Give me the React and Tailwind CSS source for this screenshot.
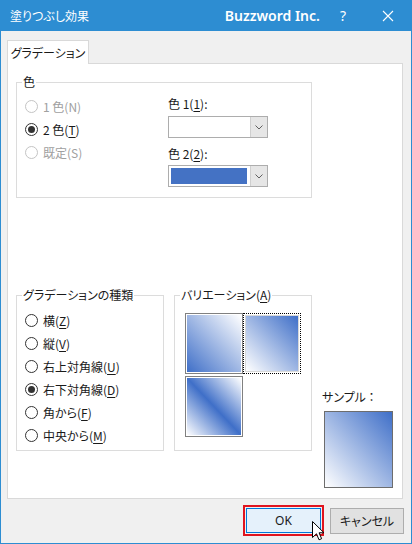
import React from "react";

const jp = "font-['Noto_Sans_CJK_JP','Noto_Sans',sans-serif] [font-feature-settings:'palt']";

function Radio({ label, checked, disabled }) {
  return (
    <div className="flex items-center h-[23px]">
      <span
        className={`w-[13px] h-[13px] rounded-full border bg-white flex items-center justify-center ${
          disabled ? "border-[#c4c4c4]" : "border-[#333333]"
        }`}
      >
        {checked && <span className="w-[7px] h-[7px] rounded-full bg-[#333333]" />}
      </span>
      <span className={`ml-[5px] text-[12px] leading-[14px] ${disabled ? "text-[#a0a0a0]" : "text-[#1a1a1a]"}`}>
        {label}
      </span>
    </div>
  );
}

function Group({ title, className, children }) {
  return (
    <div className={`relative border border-[#dcdcdc] ${className}`}>
      <span className="absolute -top-[8px] left-[5px] bg-white px-[1px] text-[12px] leading-[14px] text-[#1a1a1a]">
        {title}
      </span>
      {children}
    </div>
  );
}

function Combo({ fill }) {
  return (
    <div className="flex w-[100px] h-[22px] border border-[#adadad] bg-white">
      <div className="flex-1 p-[2px] pr-[3px]">
        {fill && <div className="w-full h-full bg-[#4472c4]" />}
      </div>
      <div className="w-[17px] bg-[#e6e6e6] border-l border-[#cfcfcf] flex items-center justify-center">
        <svg width="8" height="5" viewBox="0 0 8 5">
          <path d="M0.5 0.5 L4 4 L7.5 0.5" fill="none" stroke="#606060" strokeWidth="1" />
        </svg>
      </div>
    </div>
  );
}

const u = (c) => <span className="underline underline-offset-2">{c}</span>;

export default function App() {
  return (
    <div className={`w-[412px] h-[544px] bg-[#2d8dd2] flex flex-col ${jp}`}>
      {/* title bar */}
      <div className="h-[31px] flex items-center pl-[10px] text-white">
        <span className="text-[12px]">塗りつぶし効果</span>
        <span className="ml-auto text-[14px] font-semibold font-['Noto_Sans',sans-serif]">Buzzword Inc.</span>
        <span className="ml-[20px] text-[14px] font-['Noto_Sans',sans-serif]">?</span>
        <svg className="ml-[36px] mr-[18px]" width="12" height="12" viewBox="0 0 12 12">
          <path d="M1 1 L11 11 M11 1 L1 11" stroke="white" strokeWidth="1.1" />
        </svg>
      </div>

      {/* body */}
      <div className="flex-1 flex flex-col bg-[#f0f0f0] mx-[1px] mb-[1px] pt-[9px] pl-[6px]">
        <div className="relative z-10 -mb-[1px] w-[82px] h-[24px] bg-white border border-b-0 border-[#d9d9d9] flex items-center justify-center text-[12px] text-[#1a1a1a]">
          グラデーション
        </div>

        <div className="w-[396px] h-[436px] bg-white border border-[#d9d9d9] pt-[18px] pl-[8px]">
          {/* colour group */}
          <Group title="色" className="w-[296px] h-[116px] flex">
            <div className="w-[151px] pl-[8px] pt-[12px]">
              <Radio label="1 色(N)" disabled />
              <Radio label={<>2 色({u("T")})</>} checked />
              <Radio label="既定(S)" disabled />
            </div>
            <div className="pt-[14px] text-[12px] leading-[14px] text-[#1a1a1a]">
              <div>色 1({u("1")}):</div>
              <div className="mt-[5px]"><Combo /></div>
              <div className="mt-[9px]">色 2({u("2")}):</div>
              <div className="mt-[4px]"><Combo fill /></div>
            </div>
          </Group>

          <div className="mt-[97px] flex items-start gap-[10px]">
            <Group title="グラデーションの種類" className="w-[148px] h-[156px] pl-[8px] pt-[13px]">
              <Radio label={<>横({u("Z")})</>} />
              <Radio label={<>縦({u("V")})</>} />
              <Radio label={<>右上対角線({u("U")})</>} />
              <Radio label={<>右下対角線({u("D")})</>} checked />
              <Radio label={<>角から({u("F")})</>} />
              <Radio label={<>中央から({u("M")})</>} />
            </Group>

            <Group title={<>バリエーション({u("A")})</>} className="w-[138px] h-[156px] pl-[10px] pt-[17px]">
              <div className="grid grid-cols-[58px_58px] gap-y-[2px]">
                <div className="h-[61px] border border-[#808080] p-[1px] bg-white">
                  <div className="w-full h-full bg-[linear-gradient(to_top_right,#3f6fc8,#ffffff)]" />
                </div>
                <div className="h-[61px] border border-dotted border-black p-[1px] bg-white">
                  <div className="w-full h-full border border-[#d8d8d8] bg-[linear-gradient(to_top_right,#ffffff,#3f6fc8)]" />
                </div>
                <div className="h-[61px] border border-[#808080] p-[1px] bg-white">
                  <div className="w-full h-full bg-[linear-gradient(to_top_right,#ffffff,#3f6fc8_50%,#ffffff)]" />
                </div>
              </div>
            </Group>

            <div className="pt-[95px]">
              <div className="text-[12px] leading-[14px] text-[#1a1a1a]">サンプル ：</div>
              <div className="mt-[7px] ml-[2px] w-[69px] h-[77px] border border-[#6d6d6d] bg-[linear-gradient(to_top_right,#ffffff,#3f6fc8)]" />
            </div>
          </div>
        </div>

        {/* buttons */}
        <div className="mt-[6px] flex items-center justify-end gap-[6px] pr-[7px]">
          <div className="relative border-2 border-[#e0141e] p-[1px]">
            <div className="w-[75px] h-[25px] border border-[#0078d7] bg-[#e5f1fb] flex items-center justify-center text-[12px] text-[#1a1a1a] font-['Noto_Sans',sans-serif]">
              OK
            </div>
            <svg className="absolute left-[67px] top-[14px]" width="13" height="20" viewBox="0 0 13 20">
              <path d="M0.5 0.5 L0.5 16.5 L4.5 12.8 L7 18.8 L9.6 17.7 L7.1 11.8 L12 11.8 Z" fill="white" stroke="black" strokeWidth="1" strokeLinejoin="miter" />
            </svg>
          </div>
          <div className="w-[74px] h-[26px] border border-[#adadad] bg-[#e1e1e1] flex items-center justify-center text-[12px] text-[#1a1a1a]">
            キャンセル
          </div>
        </div>
      </div>
    </div>
  );
}
